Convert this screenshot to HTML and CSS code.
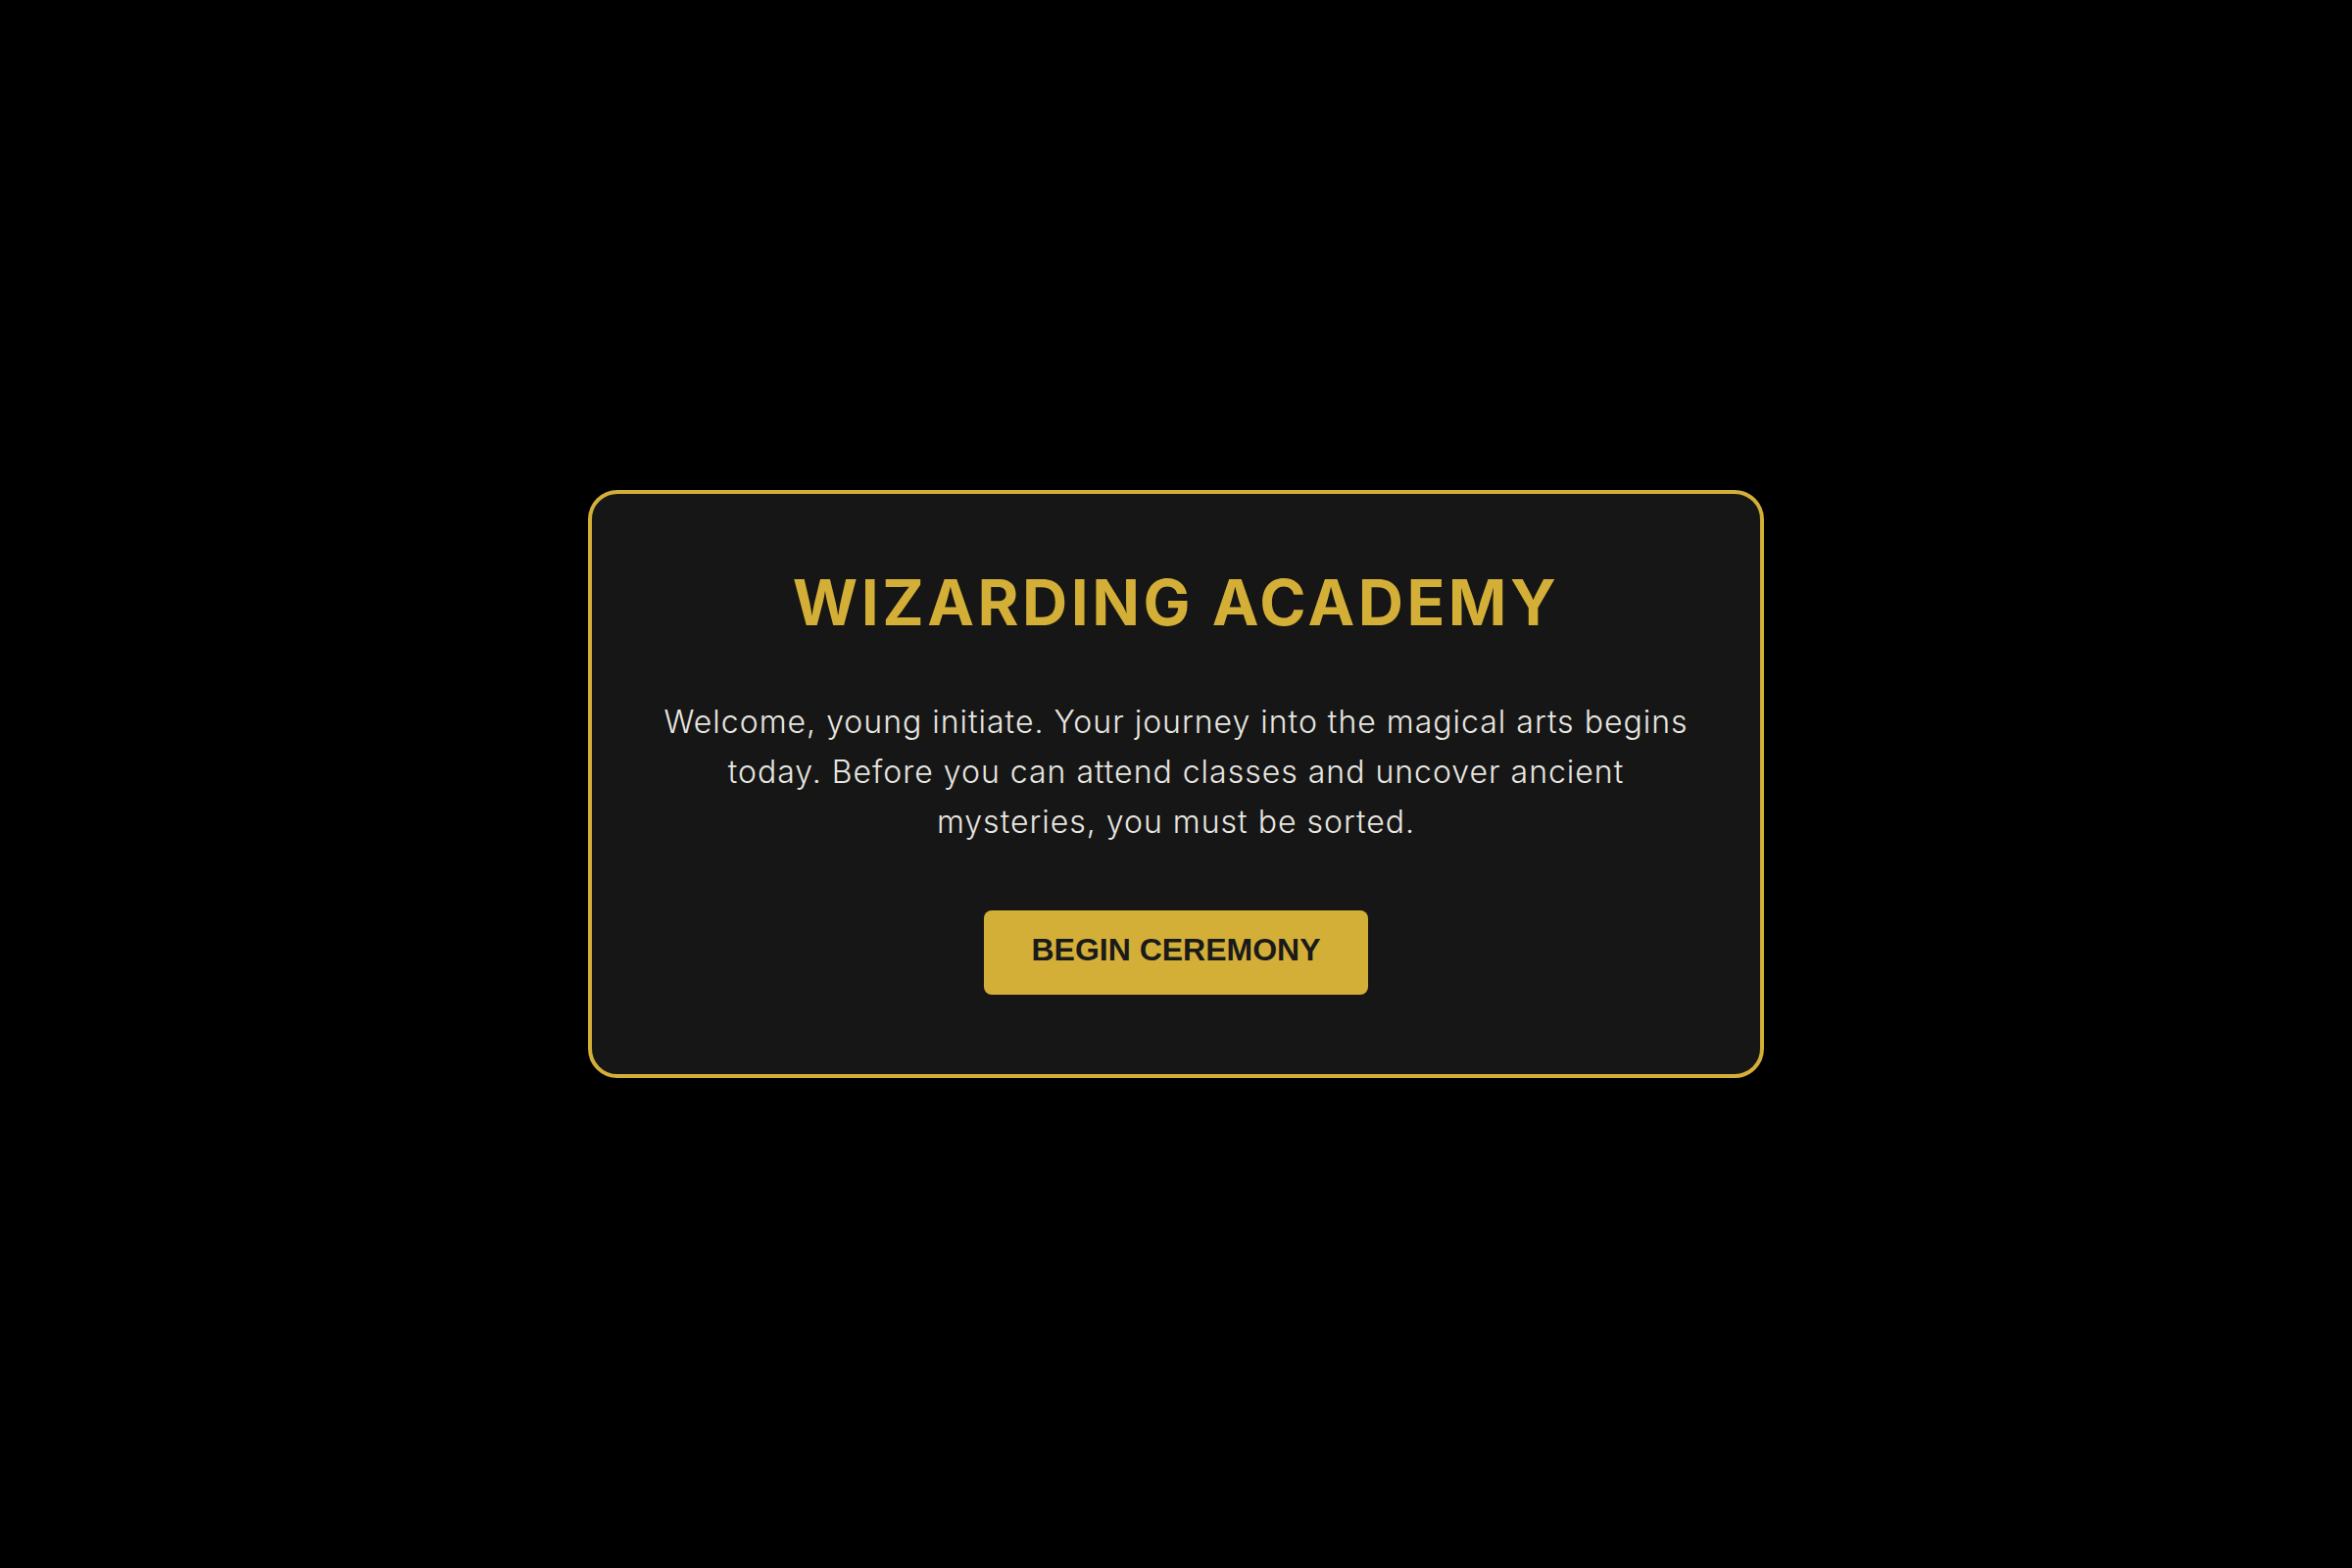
FILE: index.html
```html
<!DOCTYPE html>
<html lang="en">
<head>
<meta charset="utf-8">
<title>Wizarding Academy</title>
<link rel="stylesheet" href="styles.css">
</head>
<body>
<main class="stage">
  <section class="card">
    <h1 class="title">WIZARDING ACADEMY</h1>
    <p class="intro">Welcome, young initiate. Your journey into the magical arts begins today. Before you can attend classes and uncover ancient mysteries, you must be sorted.</p>
    <button class="begin" type="button">BEGIN CEREMONY</button>
  </section>
</main>
</body>
</html>
```

FILE: styles.css
```css
html, body {
  margin: 0;
  padding: 0;
  background: #000;
}
.stage {
  width: 2400px;
  height: 1600px;
  display: flex;
  align-items: center;
  justify-content: center;
}
.card {
  box-sizing: border-box;
  width: 1200px;
  height: 600px;
  background: #161616;
  border: 4px solid #d4af37;
  border-radius: 30px;
  padding: 66px 64px 0;
  display: flex;
  flex-direction: column;
  align-items: center;
  text-align: center;
}
.title {
  margin: 0 0 51px;
  font-family: Inter, "Noto Sans", sans-serif;
  font-weight: 700;
  font-size: 64px;
  line-height: 1.4;
  letter-spacing: 3.5px;
  color: #d4af37;
}
.intro {
  margin: 0 0 65px;
  font-family: Inter, "Noto Sans", sans-serif;
  font-weight: 300;
  font-size: 32px;
  line-height: 1.6;
  letter-spacing: 1px;
  color: #e8e6e0;
}
.begin {
  font-family: "Liberation Sans", Arial, sans-serif;
  font-weight: 700;
  font-size: 32px;
  color: #1a1a1a;
  background: #d4af37;
  border: none;
  border-radius: 8px;
  padding: 22px 48px 27px;
  cursor: pointer;
}
```
